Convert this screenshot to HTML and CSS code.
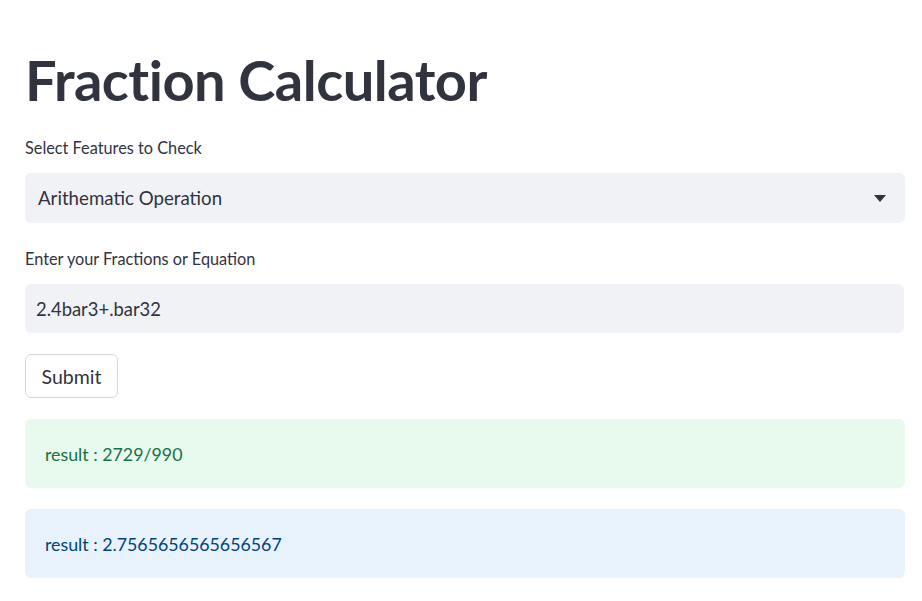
FILE: index.html
```html
<!DOCTYPE html>
<html>
<head>
<meta charset="utf-8">
<link rel="stylesheet" href="styles.css">
</head>
<body>
<main class="main">
  <h1 class="title">Fraction Calculator</h1>
  <div class="label label-first">Select Features to Check</div>
  <div class="select">
    <span class="select-value">Arithematic Operation</span>
    <svg class="caret" width="12" height="7" viewBox="0 0 12 7"><path d="M0 0 H12 L6 7 Z" fill="#31333f"/></svg>
  </div>
  <div class="label label-second">Enter your Fractions or Equation</div>
  <div class="input">2.4bar3+.bar32</div>
  <button class="button">Submit</button>
  <div class="alert alert-success">result : 2729/990</div>
  <div class="alert alert-info">result : 2.7565656565656567</div>
</main>
</body>
</html>
```

FILE: styles.css
```css
html, body {
  margin: 0;
  padding: 0;
  background: #ffffff;
}
body {
  font-family: Lato, "Open Sans", sans-serif;
  color: #31333f;
}
.main {
  width: 880px;
  padding: 46px 17px 0 25px;
  display: flex;
  flex-direction: column;
  align-items: flex-start;
}
.title {
  margin: 0;
  font-size: 56px;
  line-height: 68px;
  height: 68px;
  font-weight: 700;
  letter-spacing: -0.5px;
  color: #31333f;
}
.label {
  font-size: 16.3px;
  line-height: 20px;
  height: 20px;
  color: #31333f;
}
.label-first { margin-top: 24px; }
.label-second { margin-top: 26px; }
.select {
  margin-top: 15px;
  width: 880px;
  height: 50px;
  box-sizing: border-box;
  background: #f0f2f6;
  border-radius: 6px;
  display: flex;
  align-items: center;
  justify-content: space-between;
  padding: 0 19px 0 13px;
  font-size: 18.7px;
}
.caret { display: block; }
.input {
  margin-top: 15px;
  width: 879px;
  height: 49px;
  box-sizing: border-box;
  background: #f0f2f6;
  border-radius: 6px;
  display: flex;
  align-items: center;
  padding: 0 11px;
  font-size: 18.4px;
}
.button {
  margin-top: 21px;
  height: 44px;
  width: 93px;
  box-sizing: border-box;
  background: #ffffff;
  border: 1px solid #d6d6d9;
  border-radius: 6px;
  font-family: inherit;
  font-size: 19.5px;
  color: #31333f;
  padding: 0;
}
.alert {
  margin-top: 21px;
  width: 880px;
  height: 69px;
  box-sizing: border-box;
  border-radius: 6px;
  display: flex;
  align-items: center;
  padding: 0 20px;
  font-size: 17.8px;
}
.alert-success {
  background: #e8f9ee;
  color: #177245;
}
.alert-info {
  background: #e8f2fc;
  color: #004280;
}
```
